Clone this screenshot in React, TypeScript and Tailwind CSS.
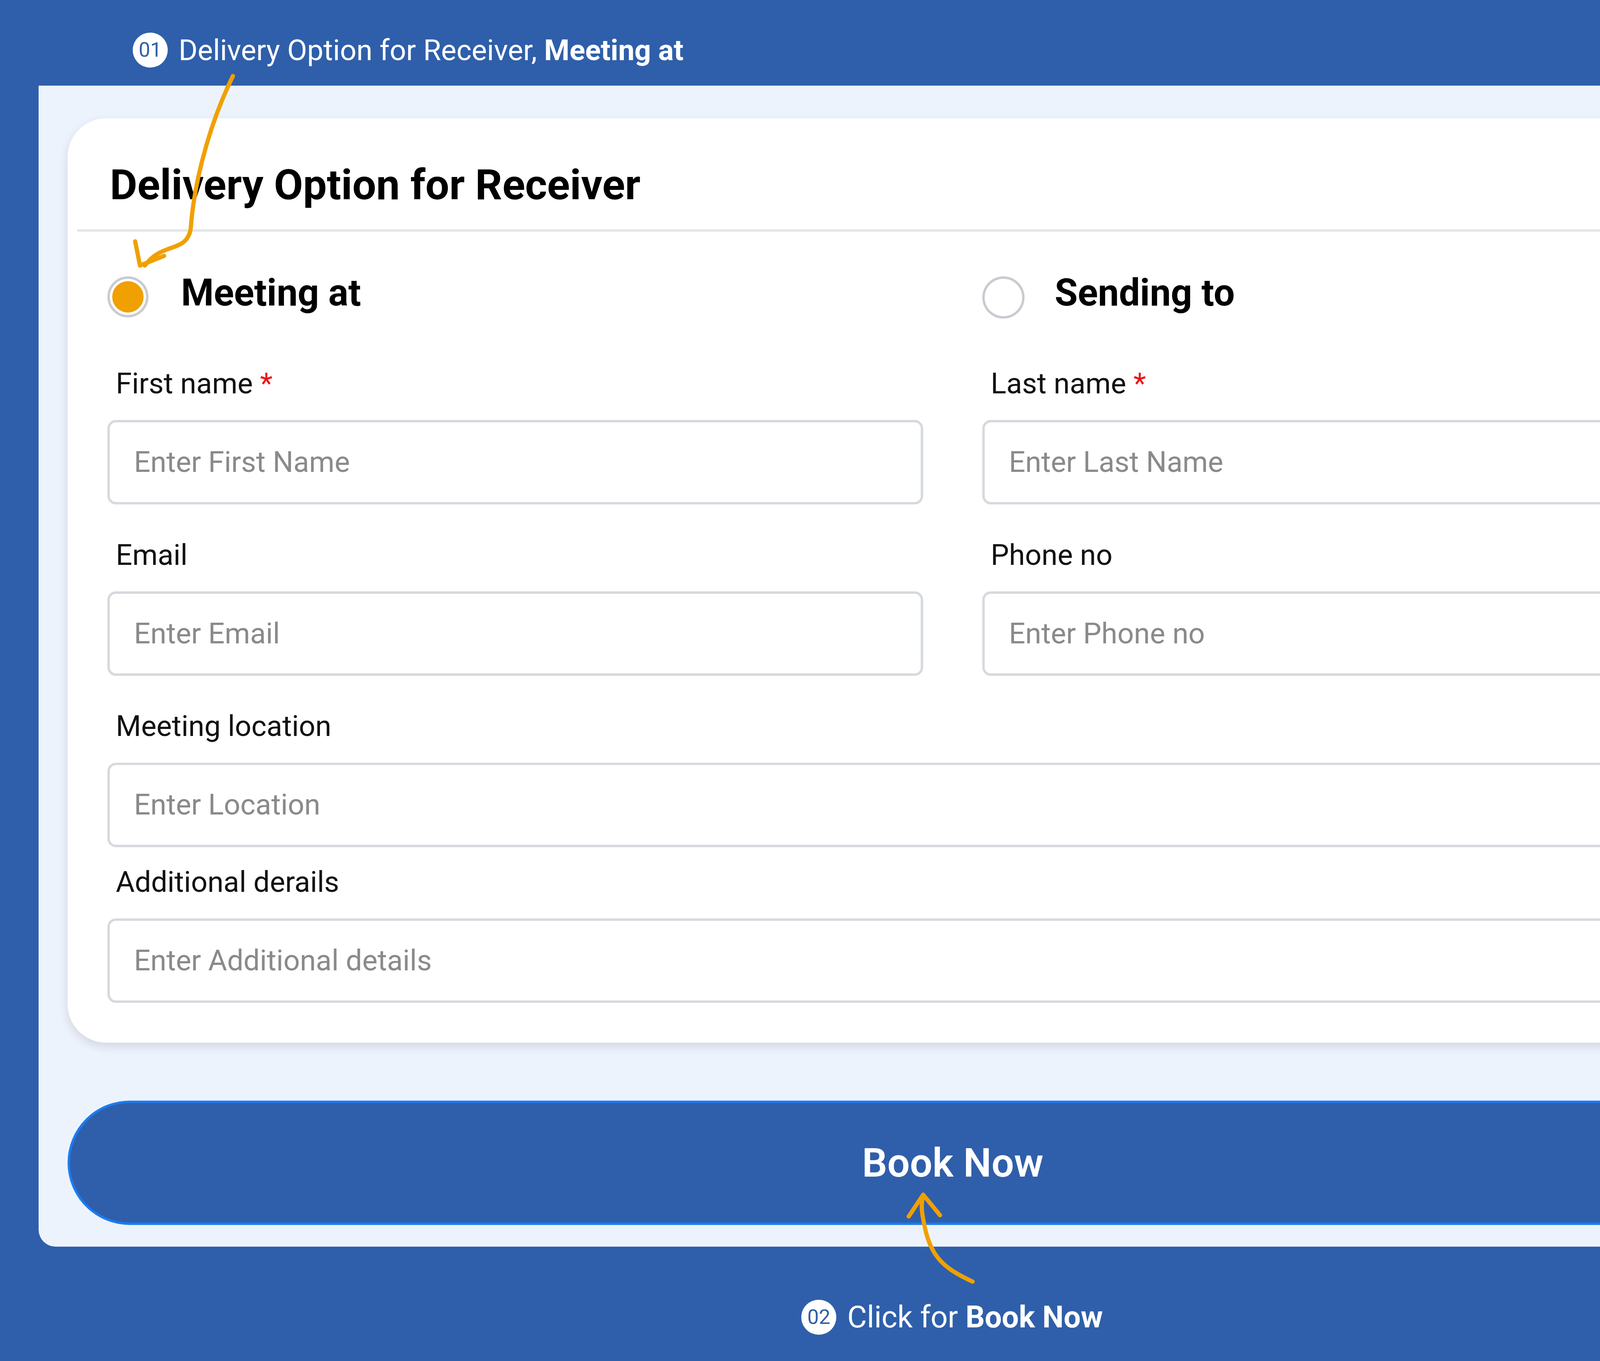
import React from "react";

const Field = ({ label, ph, req }: { label: string; ph: string; req?: boolean }) => (
  <div className="flex flex-col">
    <div className="text-[24px] text-[#111] pl-[7px] h-[30px] leading-[30px]">
      {label}
      {req && <span className="text-[#e11] ml-[6px]">*</span>}
    </div>
    <div className="mt-[15px] h-[70px] border-2 border-[#d6d9de] rounded-[7px] flex items-center px-[20px] text-[24px] text-[#8a8a8a]">
      {ph}
    </div>
  </div>
);

export default function App() {
  return (
    <div className="w-[4844px] h-[3484px] bg-[#2f5faa] overflow-hidden relative">
      <div className="scale-[3.0893] origin-top-left w-[1568px] h-[1128px] relative font-[Roboto,sans-serif]">
        <div className="h-[71px] flex items-center pl-[110px] pt-[12px] text-white text-[24px]">
          <span className="w-[29px] h-[29px] rounded-full bg-white text-[#2f5faa] text-[17px] flex items-center justify-center mr-[9px]">01</span>
          Delivery Option for Receiver,&nbsp;<b className="font-bold">Meeting at</b>
        </div>
        <div className="ml-[32px] w-[1515px] h-[962px] bg-[#edf3fd] rounded-b-[14px] pt-[27px] px-[24px]">
          <div className="bg-white rounded-[32px] h-[766px] shadow-[0_3px_8px_rgba(0,0,0,0.12)] pt-[30px]">
            <div className="text-[35px] font-bold text-black pl-[35px] h-[52px] leading-[52px]">Delivery Option for Receiver</div>
            <div className="mx-[8px] mt-[10px] h-[2px] bg-[#e2e5ea]" />
            <div className="grid grid-cols-2 gap-x-[49px] px-[33px] mt-[31px]">
              <div className="flex items-center h-[40px]">
                <span className="w-[34px] h-[34px] rounded-full border-2 border-[#c8cbd0] flex items-center justify-center mt-[6px]">
                  <span className="w-[26px] h-[26px] rounded-full bg-[#f0a000]" />
                </span>
                <span className="ml-[27px] text-[31px] font-bold">Meeting at</span>
              </div>
              <div className="flex items-center h-[40px]">
                <span className="w-[35px] h-[35px] rounded-full border-2 border-[#c8cbd0] mt-[6px]" />
                <span className="ml-[25px] text-[31px] font-bold">Sending to</span>
              </div>
            </div>
            <div className="grid grid-cols-2 gap-x-[49px] gap-y-[27px] px-[33px] mt-[40px]">
              <Field label="First name" ph="Enter First Name" req />
              <Field label="Last name" ph="Enter Last Name" req />
              <Field label="Email" ph="Enter Email" />
              <Field label="Phone no" ph="Enter Phone no" />
              <div className="col-span-2"><Field label="Meeting location" ph="Enter Location" /></div>
            </div>
            <div className="px-[33px] mt-[14px]">
              <Field label="Additional derails" ph="Enter Additional details" />
            </div>
          </div>
          <div className="mt-[48px] h-[103px] rounded-full bg-[#2f5faa] border-2 border-[#1b7cf0] flex items-center justify-center text-white text-[33px] font-semibold">
            Book Now
          </div>
        </div>
        <div className="flex items-center justify-center pl-[10px] mt-[40px] text-white text-[25px]">
          <span className="w-[29px] h-[29px] rounded-full bg-white text-[#2f5faa] text-[17px] flex items-center justify-center mr-[9px]">02</span>
          Click for&nbsp;<b className="font-bold">Book Now</b>
        </div>
        <svg className="absolute left-0 top-0 pointer-events-none" width="1568" height="1128" fill="none" stroke="#f0a000" strokeWidth="3.5" strokeLinecap="round" strokeLinejoin="round">
          <path d="M193 63 C170 110 160 160 158 190 C154 210 135 200 120 220" />
          <path d="M112 200 L116 220 L136 212" />
          <path d="M806 1062 C780 1050 770 1040 765 1010 C763 1000 764 995 765 990" />
          <path d="M753 1008 L765 990 L779 1007" />
        </svg>
      </div>
    </div>
  );
}
